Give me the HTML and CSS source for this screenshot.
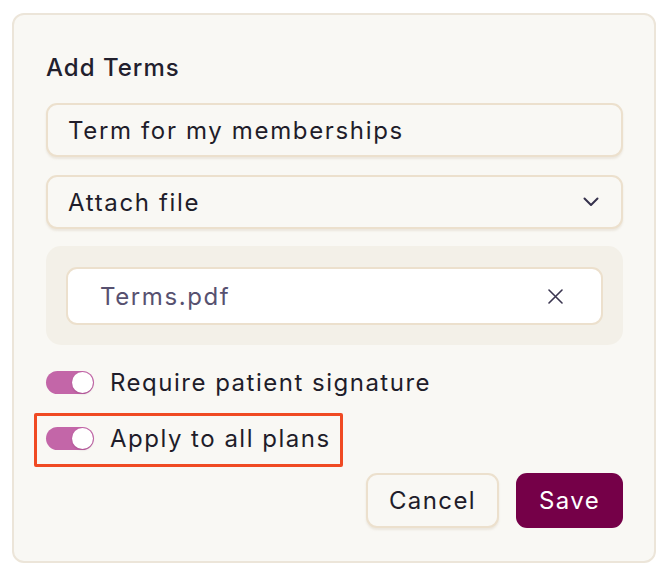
FILE: index.html
```html
<!DOCTYPE html>
<html lang="en">
<head>
<meta charset="utf-8">
<title>Add Terms</title>
<link rel="stylesheet" href="styles.css">
</head>
<body>
<div class="card">
  <h2 class="title">Add Terms</h2>
  <div class="field"><span class="field-text">Term for my memberships</span></div>
  <div class="field select">
    <span class="field-text">Attach file</span>
    <svg class="chev" width="16" height="10" viewBox="0 0 16 10"><path d="M1.5 1.5 L8 8 L14.5 1.5" fill="none" stroke="#36324c" stroke-width="2" stroke-linecap="round" stroke-linejoin="round"/></svg>
  </div>
  <div class="files">
    <div class="file">
      <span class="file-name">Terms.pdf</span>
      <svg class="close" width="15" height="15" viewBox="0 0 15 15"><path d="M1 1 L14 14 M14 1 L1 14" fill="none" stroke="#3b3650" stroke-width="1.6" stroke-linecap="round"/></svg>
    </div>
  </div>
  <div class="toggles">
    <div class="toggle-row">
      <span class="toggle"><span class="knob"></span></span>
      <span class="toggle-label">Require patient signature</span>
    </div>
    <div class="toggle-row highlighted">
      <span class="toggle"><span class="knob"></span></span>
      <span class="toggle-label">Apply to all plans</span>
    </div>
  </div>
  <div class="actions">
    <button class="btn btn-cancel">Cancel</button>
    <button class="btn btn-save">Save</button>
  </div>
</div>
</body>
</html>
```
FILE: styles.css
```css
* { box-sizing: border-box; }
html, body { margin: 0; padding: 0; background: #ffffff; }
body {
  font-family: Inter, "Open Sans", "Liberation Sans", sans-serif;
  color: #1f1d2a;
}
.card {
  margin: 13px 0 0 12px;
  width: 644px;
  height: 550px;
  background: #f9f8f4;
  border: 2px solid #ece5d9;
  border-radius: 12px;
  padding: 0 31px 0 32px;
  display: flex;
  flex-direction: column;
}
.title {
  margin: 0;
  padding-top: 38px;
  height: 88px;
  font-size: 24px;
  font-weight: 500;
  line-height: 30px;
  color: #22202d;
  letter-spacing: 1px;
}
.field {
  height: 54px;
  border: 2px solid #ece0cd;
  border-radius: 11px;
  background: #f9f8f4;
  box-shadow: 0 2px 2px rgba(200, 185, 160, 0.25);
  display: flex;
  align-items: center;
  padding: 0 22px 0 20px;
  margin-bottom: 18px;
}
.field-text {
  font-size: 24px;
  letter-spacing: 1.65px;
  flex: 1;
}
.select { margin-bottom: 17px; }
.chev { display: block; }
.files {
  height: 99px;
  background: #f3f0e8;
  border-radius: 15px;
  padding: 21px 20px;
}
.file {
  height: 58px;
  background: #ffffff;
  border: 2px solid #ece0cd;
  border-radius: 11px;
  display: flex;
  align-items: center;
  padding: 0 38px 0 32px;
}
.file-name {
  flex: 1;
  font-size: 24px;
  color: #575170;
  letter-spacing: 1.6px;
}
.close { display: block; }
.toggles {
  display: flex;
  flex-direction: column;
  align-items: flex-start;
  gap: 26px;
  padding-top: 22px;
}
.toggle-row {
  display: flex;
  align-items: center;
  gap: 16px;
  height: 30px;
  position: relative;
}
.highlighted::after {
  content: "";
  position: absolute;
  left: -12px;
  right: -12px;
  top: -10px;
  bottom: -14px;
  border: 3px solid #f04a23;
  border-radius: 2px;
  pointer-events: none;
}
.toggle {
  width: 48px;
  height: 23px;
  border-radius: 12px;
  background: #c366a8;
  position: relative;
  display: block;
}
.knob {
  position: absolute;
  right: 1px;
  top: 1px;
  width: 21px;
  height: 21px;
  border-radius: 50%;
  background: #ffffff;
  box-shadow: 0 1px 2px rgba(90, 20, 70, 0.25);
}
.toggle-label {
  font-size: 24px;
  letter-spacing: 1.5px;
  color: #1f1d2a;
}
.actions {
  display: flex;
  justify-content: flex-end;
  gap: 17px;
  margin-top: 20px;
}
.btn {
  height: 55px;
  border-radius: 11px;
  font-family: inherit;
  font-size: 24px;
  letter-spacing: 1.4px;
  cursor: pointer;
}
.btn-cancel {
  width: 133px;
  background: #f9f8f4;
  border: 2px solid #ece0cd;
  color: #1f1d2a;
  box-shadow: 0 2px 2px rgba(200, 185, 160, 0.25);
}
.btn-save {
  width: 107px;
  background: #750048;
  border: none;
  color: #ffffff;
}
```
